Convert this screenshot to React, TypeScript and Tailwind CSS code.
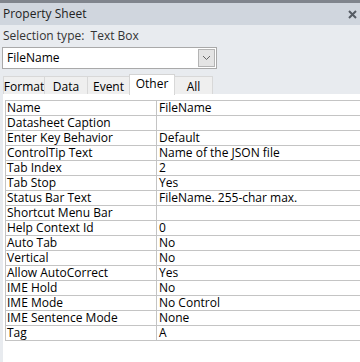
const rows: [string, string][] = [
  ['Name', 'FileName'],
  ['Datasheet Caption', ''],
  ['Enter Key Behavior', 'Default'],
  ['ControlTip Text', 'Name of the JSON file'],
  ['Tab Index', '2'],
  ['Tab Stop', 'Yes'],
  ['Status Bar Text', 'FileName. 255-char max.'],
  ['Shortcut Menu Bar', ''],
  ['Help Context Id', '0'],
  ['Auto Tab', 'No'],
  ['Vertical', 'No'],
  ['Allow AutoCorrect', 'Yes'],
  ['IME Hold', 'No'],
  ['IME Mode', 'No Control'],
  ['IME Sentence Mode', 'None'],
  ['Tag', 'A'],
];

const tabs = [
  { label: 'Format', w: 'w-[42px]' },
  { label: 'Data', w: 'w-[44px]' },
  { label: 'Event', w: 'w-[43px]' },
  { label: 'Other', w: 'w-[46px]', active: true },
  { label: 'All', w: 'w-[39px]' },
];

function App() {
  return (
    <div className="w-[360px] h-[362px] overflow-hidden bg-[#e8ebef] text-[12px] text-black font-['Open_Sans',sans-serif] leading-[14px]">
      <div className="h-[3px] bg-[#80858d]" />
      <div className="h-[22px] bg-[#d0d6de] flex items-center justify-between pl-[3px] pr-[3px]">
        <span className="text-[#222]">Property Sheet</span>
        <svg width="9" height="9" viewBox="0 0 9 9" className="mt-[1px]">
          <path d="M1 1 L8 8 M8 1 L1 8" stroke="#555b63" strokeWidth="2" />
        </svg>
      </div>
      <div className="h-[19px] flex items-center pl-[3px] pt-[2px] text-[#333]">
        Selection type:&nbsp; Text Box
      </div>
      <div className="ml-[2px] mt-[3px] w-[215px] h-[22px] border border-[#a9a9a9] bg-white flex items-center justify-between">
        <span className="pl-[4px]">FileName</span>
        <div className="w-[17px] h-[18px] mr-[1px] border border-[#b4b4b4] bg-[#e4e4e4] flex items-center justify-center">
          <svg width="9" height="6" viewBox="0 0 9 6">
            <path d="M1 1 L4.5 4.5 L8 1" stroke="#666" strokeWidth="1" fill="none" />
          </svg>
        </div>
      </div>
      <div className="flex items-end h-[20px] mt-[5px] pl-[3px]">
        {tabs.map((t) =>
          t.active ? (
            <div
              key={t.label}
              className={`${t.w} h-[21px] bg-white border-x border-t border-[#d4d4d4] flex items-center justify-center pb-[2px] -mb-px -mr-px`}
            >
              {t.label}
            </div>
          ) : (
            <div
              key={t.label}
              className={`${t.w} h-[18px] bg-[#efefef] border-l border-t border-r border-[#d8d8d8] -mr-px flex items-center justify-center pt-[2px]`}
            >
              {t.label}
            </div>
          )
        )}
      </div>
      <div className="ml-[3px] h-[269px] bg-white pt-[6px] pl-[2px]">
        <div className="border-t border-l border-[#c4c4c4]">
          {rows.map(([k, v]) => (
            <div key={k} className="flex h-[15px] border-b border-[#c4c4c4]">
              <div className="w-[151px] border-r border-[#c4c4c4] pl-[1px] flex items-center">{k}</div>
              <div className="flex-1 pl-[2px] flex items-center">{v}</div>
            </div>
          ))}
        </div>
      </div>
    </div>
  );
}

export default App;
